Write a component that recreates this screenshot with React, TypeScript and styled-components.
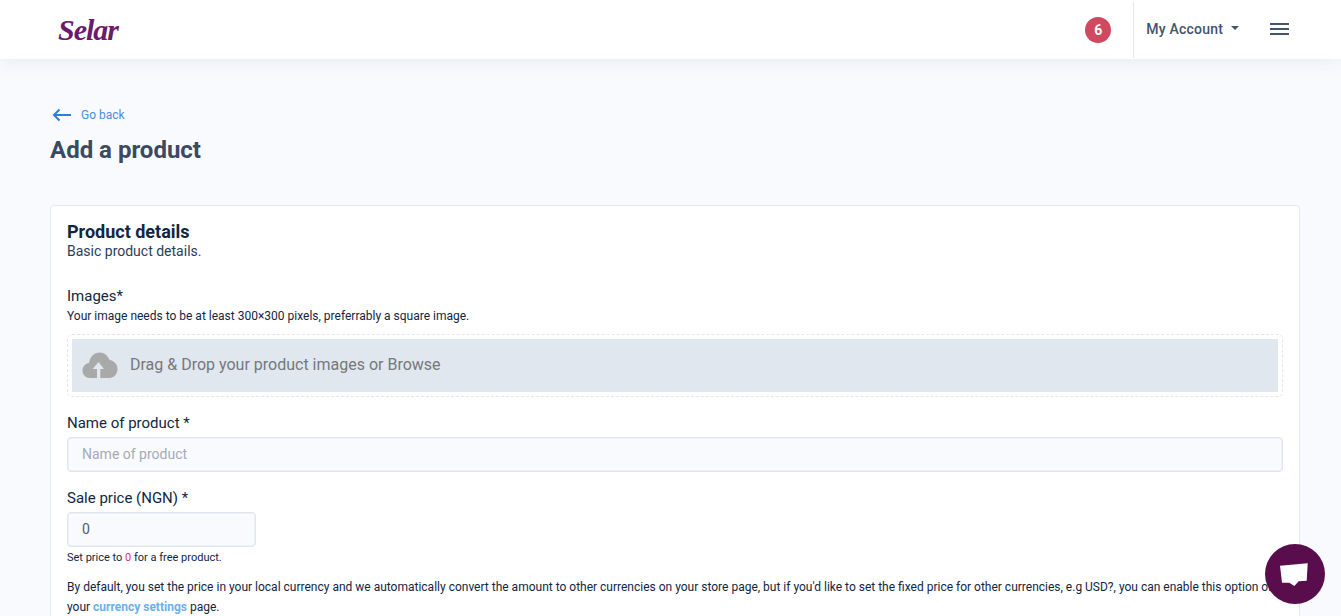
import React from 'react';
import styled, { createGlobalStyle } from 'styled-components';

const GlobalStyle = createGlobalStyle`
  html, body {
    margin: 0;
    height: 100%;
    overflow: hidden;
    background: #f9fafe;
    font-family: Roboto, "Liberation Sans", sans-serif;
  }
  * {
    box-sizing: border-box;
  }
`;

const App = () => {
  return (
    <>
      <GlobalStyle />
      <NavBar>
        <Logo>Selar</Logo>
        <NavRight>
          <Badge>6</Badge>
          <AccountMenu>
            My Account
            <Caret />
          </AccountMenu>
          <Burger aria-label="Menu">
            <span />
            <span />
            <span />
          </Burger>
        </NavRight>
      </NavBar>
      <Main>
        <BackLink href="#">
          <svg width="20" height="14" viewBox="0 0 20 14" fill="none" stroke="#2f7fd0" strokeWidth="2">
            <path d="M19 7H2M7.500 1.500L2 7l5.500 5.500" />
          </svg>
          Go back
        </BackLink>
        <PageTitle>Add a product</PageTitle>
        <Card>
          <CardTitle>Product details</CardTitle>
          <CardSub>Basic product details.</CardSub>
          <ImagesLabel>Images*</ImagesLabel>
          <Hint>Your image needs to be at least 300×300 pixels, preferrably a square image.</Hint>
          <DropOuter>
            <DropInner>
              <svg width="36" height="26" viewBox="0 0 36 26">
                <path
                  fill="#a9a9a9"
                  d="M8 26C3.500 26 .5 22.500 .5 18.500 .5 14.500 3.500 11.500 7 11 8 5 12 .5 17.500 .5 22.500 .5 26 4 27.500 8 32 8.500 35.500 12.500 35.500 17 35.500 22 32 26 27.500 26H18.300V17H22L16.500 10 10.700 17H15V26Z"
                />
              </svg>
              Drag &amp; Drop your product images or Browse
            </DropInner>
          </DropOuter>
          <NameLabel>Name of product *</NameLabel>
          <TextInput placeholder="Name of product" readOnly />
          <PriceLabel>Sale price (NGN) *</PriceLabel>
          <PriceInput value="0" readOnly />
          <PriceHint>
            Set price to <Zero>0</Zero> for a free product.
          </PriceHint>
          <Note>
            By default, you set the price in your local currency and we automatically convert the amount to other
            currencies on your store page, but if you'd like to set the fixed price for other currencies, e.g USD?, you
            can enable this option on your <NoteLink href="#">currency settings</NoteLink> page.
          </Note>
        </Card>
      </Main>
      <ChatButton aria-label="Chat">
        <svg width="30" height="26" viewBox="0 0 30 26">
          <path fill="#fff" d="M0 4.700L27.700 2.300l-1 17.400-8 .6-4.400 4.700-5-3.300H2z" />
        </svg>
      </ChatButton>
    </>
  );
};

export default App;

const NavBar = styled.header`
  height: 59px;
  padding: 1px 52px 1px 58px;

  display: flex;
  justify-content: space-between;
  align-items: center;

  background: #fff;
  box-shadow: 0 0 20px rgba(50, 60, 80, 0.1);
`;

const Logo = styled.span`
  font-family: "Liberation Serif", serif;
  font-style: italic;
  font-weight: bold;
  font-size: 30px;
  letter-spacing: -1px;
  color: #6a1b6a;
`;

const NavRight = styled.div`
  height: 100%;

  display: flex;
  align-items: center;
`;

const Badge = styled.span`
  width: 26px;
  height: 26px;
  margin-right: 22px;

  display: flex;
  align-items: center;
  justify-content: center;

  border-radius: 50%;
  background: #cf4a5e;

  font-weight: bold;
  font-size: 14px;
  color: #fff;
`;

const AccountMenu = styled.div`
  height: 56px;
  padding: 0 0 2px 12px;

  display: flex;
  align-items: center;

  border-left: 1px solid #e2e6ee;

  font-weight: 500;
  font-size: 14px;
  letter-spacing: 0.2px;
  color: #44546c;
`;

const Caret = styled.i`
  margin-left: 8px;
  margin-top: -2px;

  border-top: 4.5px solid #44546c;
  border-left: 4.5px solid transparent;
  border-right: 4.5px solid transparent;
`;

const Burger = styled.div`
  width: 19px;
  margin: 0 0 1px 31px;

  display: flex;
  flex-direction: column;
  gap: 3px;

  span {
    height: 2px;
    background: #44546c;
  }
`;

const Main = styled.main`
  padding: 48px 41px 0 50px;
`;

const BackLink = styled.a`
  height: 16px;
  padding-left: 2px;

  display: flex;
  align-items: center;
  gap: 9px;

  font-size: 12px;
  color: #4a8ddb;
  text-decoration: none;
`;

const PageTitle = styled.h1`
  margin: 13px 0 0;

  font-weight: bold;
  font-size: 24px;
  line-height: 29px;
  color: #3b4a60;
`;

const Card = styled.section`
  margin-top: 40px;
  padding: 16px;

  border: 1px solid #e4e8f0;
  border-radius: 4px;
  background: #fff;
`;

const CardTitle = styled.h2`
  margin: 0;

  font-weight: bold;
  font-size: 18px;
  line-height: 20px;
  color: #12263f;
`;

const CardSub = styled.p`
  margin: 0;

  font-size: 14px;
  line-height: 18px;
  color: #283e59;
`;

const FieldLabel = styled.label`
  display: block;

  font-size: 15px;
  line-height: 20px;
  color: #12263f;
`;

const ImagesLabel = styled(FieldLabel)`
  margin-top: 26px;
`;

const NameLabel = styled(FieldLabel)`
  margin-top: 16px;
`;

const PriceLabel = styled(FieldLabel)`
  margin-top: 16px;
`;

const Hint = styled.p`
  margin: 2px 0 0;

  font-size: 12px;
  line-height: 16px;
  color: #12263f;
`;

const DropOuter = styled.div`
  margin-top: 10px;
  padding: 4px;

  border: 1px dashed #e2e6ee;
  border-radius: 5px;
`;

const DropInner = styled.div`
  height: 53px;
  padding: 0 0 2px 10px;

  display: flex;
  align-items: center;
  gap: 12px;

  background: #e1e7ef;

  font-size: 16px;
  color: #76787b;
`;

const TextInput = styled.input`
  display: block;
  width: 100%;
  height: 35px;
  margin-top: 4px;
  padding: 0 14px 2px;

  border: 1px solid #dfe5ee;
  border-radius: 4px;
  outline: none;
  background: #f9fafe;
  box-shadow: inset 0 0 0 1px #eef1f7;

  font-family: inherit;
  font-size: 14px;
  color: #4f5d70;

  &::placeholder {
    color: #a4abb6;
  }
`;

const PriceInput = styled(TextInput)`
  width: 189px;
`;

const PriceHint = styled.p`
  margin: 3px 0 0;

  font-size: 11px;
  line-height: 15px;
  color: #12263f;
`;

const Zero = styled.span`
  color: #d6336c;
`;

const Note = styled.p`
  margin: 12px 0 0;

  font-size: 12px;
  line-height: 20px;
  color: #12263f;
`;

const NoteLink = styled.a`
  font-weight: bold;
  color: #6ab0ec;
  text-decoration: none;
`;

const ChatButton = styled.div`
  position: fixed;
  right: 16px;
  bottom: 12px;

  width: 60px;
  height: 60px;

  display: flex;
  align-items: center;
  justify-content: center;

  border-radius: 50%;
  background: #5a0d4c;
`;
